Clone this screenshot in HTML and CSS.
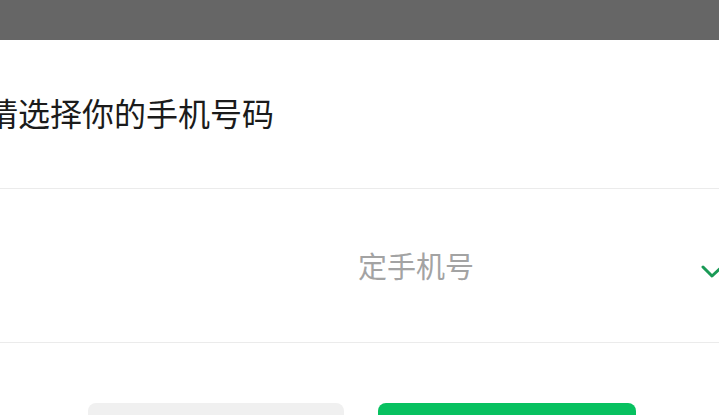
FILE: index.html
```html
<!DOCTYPE html>
<html lang="zh-CN">
<head>
<meta charset="utf-8">
<title>选择手机号</title>
<link rel="stylesheet" href="styles.css">
</head>
<body>
<div class="topbar"></div>
<div class="sheet">
  <h1 class="title">请选择你的手机号码</h1>
  <div class="row">
    <span class="row-text">定手机号</span>
    <svg class="check" width="24" height="16" viewBox="0 0 24 16" aria-hidden="true">
      <polyline points="3,3 12,12 24,1" fill="none" stroke="#1a9a56" stroke-width="3" stroke-linecap="round" stroke-linejoin="round"/>
    </svg>
  </div>
  <div class="actions">
    <button class="btn btn-cancel" type="button"></button>
    <button class="btn btn-ok" type="button"></button>
  </div>
</div>
</body>
</html>
```
FILE: styles.css
```css
html, body {
  margin: 0;
  padding: 0;
  background: #ffffff;
  width: 719px;
  height: 415px;
  overflow: hidden;
  font-family: "Noto Sans CJK SC", "Noto Sans", sans-serif;
}
.topbar {
  height: 40px;
  background: #666666;
}
.sheet {
  display: flex;
  flex-direction: column;
}
.title {
  margin: 56px 0 0 0;
  padding: 0 0 60px 0;
  text-indent: -14px;
  font-size: 32px;
  line-height: 32px;
  font-weight: 400;
  color: #1b1b1b;
  white-space: nowrap;
  border-bottom: 1px solid #ebebeb;
}
.row {
  height: 153px;
  display: flex;
  align-items: center;
  padding-left: 358px;
  border-bottom: 1px solid #ebebeb;
  position: relative;
}
.row-text {
  font-size: 29px;
  line-height: 29px;
  color: #a3a3a3;
  white-space: nowrap;
}
.check {
  position: absolute;
  left: 700px;
  top: 75px;
}
.actions {
  display: flex;
  gap: 34px;
  padding: 60px 0 0 88px;
}
.btn {
  border: none;
  height: 44px;
  border-radius: 8px;
  padding: 0;
}
.btn-cancel {
  width: 256px;
  background: #f0f0f0;
}
.btn-ok {
  width: 258px;
  background: #07c160;
}
```
